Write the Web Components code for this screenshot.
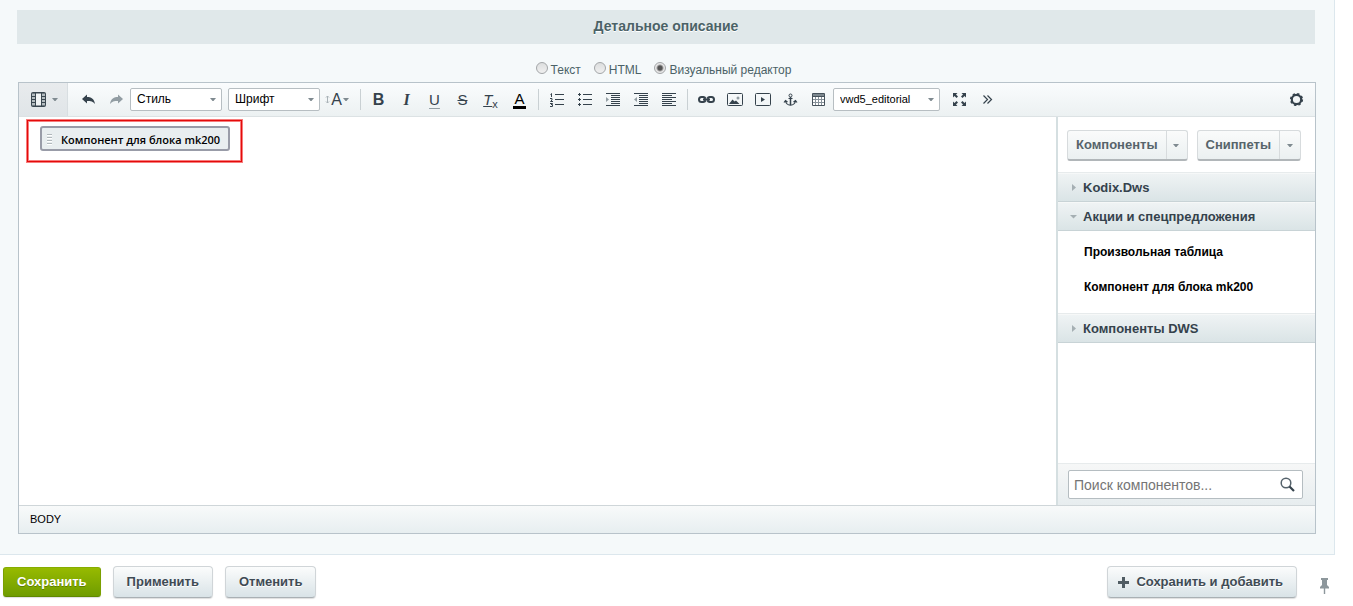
<!DOCTYPE html>
<html lang="ru">
<head>
<meta charset="utf-8">
<title>Детальное описание</title>
<style>
body { margin: 0; background: #fff; font: 13px/16px "Liberation Sans", Arial, sans-serif; color: #3f4b54; }
</style>
</head>
<body>
<edit-page></edit-page>

<script>
const define = (name, html, setup) => {
  const template = document.createElement('template');
  template.innerHTML = html;
  customElements.define(name, class extends HTMLElement {
    connectedCallback() {
      if (this.shadowRoot) return;
      const root = this.attachShadow({ mode: 'open' });
      root.append(template.content.cloneNode(true));
      if (setup) setup(this, root);
    }
  });
};

const lines = (x1, x2, ys) => ys.map(y => `<path d="M${x1} ${y}H${x2}"/>`).join('');
const ICONS = {
  film: '<rect x="1.500" y="1.500" width="14" height="14" rx="1" fill="#6d787f" stroke="#3a4750"/><path d="M5.500 2h6v13h-6z" fill="#f1f4f5" stroke="#3a4750"/><path d="M2 3h3v2H2zM2 6h3v2H2zM2 9h3v2H2zM2 12h3v2H2zM12 3h3v2h-3zM12 6h3v2h-3zM12 9h3v2h-3zM12 12h3v2h-3z" fill="#b4bcc0"/><path d="M2 5.500h3M2 8.500h3M2 11.500h3M12 5.500h3M12 8.500h3M12 11.500h3" stroke="#3a4750"/>',
  undo: '<path d="M2 8l5-4.500V6c4 0 7 1.500 8 7-2-2.500-4-3-8-3v2.500z" fill="#35424c"/>',
  redo: '<path d="M15 8l-5-4.500V6c-4 0-7 1.500-8 7 2-2.500 4-3 8-3v2.500z" fill="#929da3"/>',
  updown: '<path d="M8.500 5v7M7 6.500l1.500-1.500L10 6.500M7 10.500l1.500 1.500 1.500-1.500" stroke="#a9b2b7" fill="none"/>',
  ol: '<g stroke="#35424c" fill="none"><path d="M1.500 3.500L2.500 2.500V6M1 7.500h2V9L1.500 10.500H4M1 12.500h2.500L2 13.500h1.500v2H1"/>' + lines(6, 15, [3.5, 8.5, 13.5]) + '</g>',
  ul: '<path d="M1 3h3v1H1zM2 2h1v3H2zM1 8h3v1H1zM2 7h1v3H2zM1 13h3v1H1zM2 12h1v3H2z" fill="#35424c"/><g stroke="#35424c">' + lines(6, 15, [3.5, 8.5, 13.5]) + '</g>',
  indent: '<g stroke="#35424c">' + lines(1, 15, [2.5, 14.5]) + lines(6, 15, [4.5, 6.5, 8.5, 10.5, 12.5]) + '</g><path d="M1 6l3 2.500-3 2.500z" fill="#929da3"/>',
  outdent: '<g stroke="#35424c">' + lines(1, 15, [2.5, 14.5]) + lines(6, 15, [4.5, 6.5, 8.5, 10.5, 12.5]) + '</g><path d="M4 6L1 8.500 4 11z" fill="#929da3"/>',
  left: '<g stroke="#35424c">' + lines(1, 15, [2.5, 6.5, 10.5, 14.5]) + lines(1, 11, [4.5, 8.5, 12.5]) + '</g>',
  link: '<g fill="none" stroke="#35424c" stroke-width="2"><path d="M7.500 7.500A2.500 2.500 0 0 0 5 6H3.500a2.500 2.500 0 0 0 0 5H5a2.500 2.500 0 0 0 2.500-1.500M9.500 7.500A2.500 2.500 0 0 1 12 6h1.500a2.500 2.500 0 0 1 0 5H12a2.500 2.500 0 0 1-2.500-1.500M5 8.500h7"/></g>',
  image: '<rect x="1.500" y="2.500" width="15" height="12" rx="1" fill="none" stroke="#35424c"/><path d="M3 13l3.500-4.500 2 2 1.500-1 3.500 3.500z" fill="#35424c"/><circle cx="12" cy="7" r="1.500" fill="#929da3"/>',
  video: '<rect x="1.500" y="2.500" width="15" height="12" rx="1" fill="none" stroke="#35424c"/><path d="M7 6l4 2.500L7 11z" fill="#35424c"/>',
  anchor: '<g fill="none" stroke="#35424c"><circle cx="8.500" cy="4.500" r="1.500"/><path d="M6.500 7.500h4"/><path d="M8.500 6v8" stroke-width="1.500"/><path d="M3.500 10c.5 2.500 2.500 4 5 4.200 2.500-.2 4.500-1.700 5-4.200M2 11.500l1.500-2 2 1.500M15 11.500l-1.500-2-2 1.500" stroke-width="1.200"/></g>',
  table: '<path d="M2.500 2.500h12v12h-12z" fill="#fff" stroke="#46525b"/><path d="M3 8.500h11M3 11.500h11M5.500 5v9M8.500 5v9M11.500 5v9" stroke="#87929a"/><path d="M3 3h11v2H3z" fill="#7d888f"/><path d="M3 5.500h11" stroke="#46525b"/>',
  full: '<path d="M2 2h4.500L5 3.500 7 5.500 5.500 7l-2-2L2 6.500zM15 2h-4.500L12 3.500 10 5.500 11.500 7l2-2L15 6.500zM2 15h4.500L5 13.500l2-2L5.500 10l-2 2L2 10.500zM15 15h-4.500l1.500-1.500-2-2 1.500-1.500 2 2 1.500-1.500z" fill="#35424c"/>',
  more: '<path d="M4.500 4.500l4 4-4 4M8.500 4.500l4 4-4 4" fill="none" stroke="#35424c" stroke-width="1.200"/>',
  gear: '<circle cx="8.500" cy="8.500" r="4.700" fill="none" stroke="#35424c" stroke-width="2.200"/><circle cx="8.500" cy="8.500" r="5.800" fill="none" stroke="#35424c" stroke-width="1.600" stroke-dasharray="2.278 2.278"/>',
  search: '<circle cx="7" cy="7" r="4.800" fill="none" stroke="#56636c" stroke-width="1.500"/><path d="M10.500 10.500l4.500 4.500" stroke="#35424c" stroke-width="2.200"/>',
  plus: '<path d="M8.500 3v11M3 8.500h11" stroke="#505c63" stroke-width="3"/>',
  pin: '<path d="M5 1h7v2h-1v5l2 2v1.500H9.200V17H7.800v-5.500H4V10l2-2V3H5z" fill="#8d979c"/>',
  down: '<path d="M5 7h6L8.500 10h-1z" fill="#7f8a90"/>',
  right: '<path d="M7 5l4 3.500L7 12z" fill="#a5afb3"/>',
  open: '<path d="M5 7h7L8.500 10.500z" fill="#a5afb3"/>'
};

define('ed-icon', `<style>
:host { display: block; width: 17px; height: 17px; flex: none; }
svg { display: block; }
</style>`, (host, root) => {
  root.innerHTML += `<svg width="17" height="17" viewBox="0 0 17 17" aria-hidden="true">${ICONS[host.getAttribute('name')]}</svg>`;
});

define('tool-button', `<style>
:host { display: block; flex: 0 0 28px; }
:host([wide]) { flex-basis: 36px; }
:host([color]) { flex-basis: 30px; }
button { display: flex; align-items: center; justify-content: center; width: 100%; height: 33px; padding: 0 0 0 1px; border: 0; background: none; color: #35424c; font: 15px/16px "Liberation Sans", Arial, sans-serif; }
:host([wide]) button { padding: 0 1px 0 0; }
</style><button type="button"><slot></slot></button>`, (host, root) => {
  root.querySelector('button').setAttribute('aria-label', host.getAttribute('label'));
});

define('tool-select', `<style>
:host { display: block; flex: 0 0 92px; }
:host([wide]) { flex-basis: 107px; }
label { display: grid; align-items: center; }
select, ed-icon { grid-area: 1 / 1; }
select { appearance: none; width: 100%; height: 23px; margin: 0; padding: 0 20px 2px 6px; border: 1px solid #b7bec2; border-radius: 2px; background: #fff; color: #000; font: 12px/16px "Liberation Sans", Arial, sans-serif; }
:host([small]) select { font-size: 11px; }
ed-icon { justify-self: end; pointer-events: none; }
</style><label><select><option></option></select><ed-icon name="down"></ed-icon></label>`, (host, root) => {
  root.querySelector('option').textContent = host.getAttribute('value');
  root.querySelector('select').setAttribute('aria-label', host.getAttribute('label'));
});

define('tool-separator', `<style>
:host { display: block; flex: none; width: 1px; height: 21px; margin: 0 4px; background: #c9d0d3; }
</style>`);

define('editor-toolbar', `<style>
:host { display: flex; align-items: center; height: 33px; border-bottom: 1px solid #dce2e4; background: linear-gradient(#fafcfd, #ecf1f2); }
.view { align-self: stretch; display: flex; align-items: center; justify-content: center; width: 49px; margin-right: 6px; padding: 0 0 0 8px; box-sizing: border-box; border: 0; border-right: 1px solid #d8dee1; background: linear-gradient(#e8ebed, #e0e5e8); }
tool-select + tool-select { margin-left: 6px; }
.first { margin-right: 3px; }
b { font-size: 16px; } i { font: italic bold 16px/16px "Liberation Serif", serif; }
u { font-size: 15px; text-underline-offset: 3px; text-decoration-color: #929da3; } s { font-size: 15px; }
.clear { font-size: 15px; font-style: italic; text-decoration: underline; }
sub { font-size: 11px; line-height: 8px; align-self: flex-end; margin-bottom: 8px; }
.fore { width: 13px; text-align: center; line-height: 15px; border-bottom: 3px solid #000; color: #000; }
.updown { width: 7px; overflow: hidden; display: flex; justify-content: center; }
.updown + span { font-size: 16px; }
.caret { width: 9px; display: flex; justify-content: center; overflow: hidden; }
.end { margin-left: auto; padding-right: 5px; }
tool-select[wide] { margin-left: 1px; }
tool-select[wide] + tool-button { margin-left: 5px; }
</style>
<button class="view" type="button" aria-label="Вид"><ed-icon name="film"></ed-icon><ed-icon name="down"></ed-icon></button>
<tool-button label="Назад"><ed-icon name="undo"></ed-icon></tool-button>
<tool-button label="Вперёд"><ed-icon name="redo"></ed-icon></tool-button>
<tool-select label="Стиль" value="Стиль"></tool-select>
<tool-select label="Шрифт" value="Шрифт"></tool-select>
<tool-button wide label="Размер"><span class="updown"><ed-icon name="updown"></ed-icon></span><span>A</span><span class="caret"><ed-icon name="down"></ed-icon></span></tool-button>
<tool-separator class="first"></tool-separator>
<tool-button label="Жирный"><b>B</b></tool-button>
<tool-button label="Курсив"><i>I</i></tool-button>
<tool-button label="Подчёркнутый"><u>U</u></tool-button>
<tool-button label="Зачёркнутый"><s>S</s></tool-button>
<tool-button label="Очистить"><span class="clear">T</span><sub>x</sub></tool-button>
<tool-button color label="Цвет"><span class="fore">A</span></tool-button>
<tool-separator></tool-separator>
<tool-button label="Нумерованный список"><ed-icon name="ol"></ed-icon></tool-button>
<tool-button label="Список"><ed-icon name="ul"></ed-icon></tool-button>
<tool-button label="Увеличить отступ"><ed-icon name="indent"></ed-icon></tool-button>
<tool-button label="Уменьшить отступ"><ed-icon name="outdent"></ed-icon></tool-button>
<tool-button label="Выравнивание"><ed-icon name="left"></ed-icon></tool-button>
<tool-separator></tool-separator>
<tool-button label="Ссылка"><ed-icon name="link"></ed-icon></tool-button>
<tool-button label="Изображение"><ed-icon name="image"></ed-icon></tool-button>
<tool-button label="Видео"><ed-icon name="video"></ed-icon></tool-button>
<tool-button label="Якорь"><ed-icon name="anchor"></ed-icon></tool-button>
<tool-button label="Таблица"><ed-icon name="table"></ed-icon></tool-button>
<tool-select wide small label="Шаблон" value="vwd5_editorial"></tool-select>
<tool-button label="Во весь экран"><ed-icon name="full"></ed-icon></tool-button>
<tool-button label="Ещё"><ed-icon name="more"></ed-icon></tool-button>
<tool-button class="end" label="Настройки"><ed-icon name="gear"></ed-icon></tool-button>`);

define('mode-switch', `<style>
:host { display: flex; justify-content: center; gap: 13px; padding: 16px 8px 3px 0; }
label { display: flex; align-items: center; gap: 3px; font-size: 12px; line-height: 17px; color: #4b6267; padding-top: 2px; }
input { appearance: none; width: 12px; height: 12px; margin: 0 0 5px; border: 1px solid #a3a6a8; border-radius: 50%; background: linear-gradient(#dcdede, #f0f0f0); }
input:checked { background: radial-gradient(#555 0 2px, #e8e8e8 4px); }
</style>
<label><input type="radio" name="mode">Текст</label>
<label><input type="radio" name="mode">HTML</label>
<label><input type="radio" name="mode" checked>Визуальный редактор</label>`);

define('component-chip', `<style>
:host { display: block; width: max-content; border: 1px solid #e30b0b; outline: 1px solid #f77c7c; box-shadow: inset 0 0 0 1px #f77c7c; padding: 5px 11px 10px 12px; }
div { display: flex; align-items: center; box-sizing: border-box; height: 25px; padding: 2px 8px 0 5px; border: 2px solid #999ca8; border-radius: 3px; background: #e9eef0; color: #000; font: 600 11px/16px "Open Sans", sans-serif; }
span { width: 5px; height: 11px; margin-right: 9px; background: repeating-linear-gradient(#b1b8bc 0 1px, #fff 1px 2px, transparent 2px 3px); }
</style><div><span></span><slot></slot></div>`);

define('split-button', `<style>
:host { display: flex; box-sizing: border-box; height: 31px; border: 1px solid #d7dbdd; border-bottom: 2px solid #b1b6b9; border-radius: 3px; background: linear-gradient(#fafbfb, #ebf0f1); }
button { border: 0; background: none; color: #57646b; margin: 0; padding: 0 8px; font: bold 13px/16px "Liberation Sans", Arial, sans-serif; }
.more { display: flex; align-items: center; justify-content: center; width: 21px; padding: 0; border-left: 1px solid #d7dbdd; }
</style><button type="button"><slot></slot></button><button class="more" type="button" aria-label="Открыть меню"><ed-icon name="down"></ed-icon></button>`);

define('component-group', `<style>
:host { display: block; }
button { display: flex; align-items: center; gap: 1px; box-sizing: border-box; width: 100%; height: 29px; padding: 0 0 0 7px; border: 0; border-top: 1px solid #f6f8f8; border-bottom: 1px solid #c8d3d6; background: linear-gradient(#eff3f4, #dae4e6); color: #35424c; font: bold 13px/16px "Liberation Sans", Arial, sans-serif; }
slot { display: block; }
:host([open]) slot { padding: 4px 0 8px; border-bottom: 1px solid #e7ebec; }
</style><button type="button"><ed-icon></ed-icon><b></b></button><slot></slot>`, (host, root) => {
  const open = host.hasAttribute('open');
  const button = root.querySelector('button');
  button.setAttribute('aria-expanded', open);
  root.querySelector('b').textContent = host.getAttribute('label');
  const icon = document.createElement('ed-icon');
  icon.setAttribute('name', open ? 'open' : 'right');
  root.querySelector('ed-icon').replaceWith(icon);
});

define('component-item', `<style>
:host { display: block; padding: 0 0 0 26px; color: #000; font: bold 12px/35px "Liberation Sans", Arial, sans-serif; }
</style><slot></slot>`);

define('component-panel', `<style>
:host { display: flex; flex-direction: column; width: 257px; border-left: 2px solid #d5dfe1; background: #fff; }
header { display: flex; gap: 9px; padding: 13px 9px 11px; border-bottom: 1px solid #e7ebec; }
footer { margin-top: auto; padding: 6px 12px 6px 10px; border-top: 1px solid #e7ebec; background: linear-gradient(#f6f7f7, #e7edef); }
label { display: flex; align-items: center; box-sizing: border-box; height: 29px; padding: 0 6px 0 5px; border: 1px solid #b5bdc1; border-radius: 2px; background: #fff; }
input { flex: 1; min-width: 0; padding: 0; border: 0; outline: 0; background: none; font: 14px/16px "Liberation Sans", Arial, sans-serif; }
input::placeholder { color: #757575; opacity: 1; }
</style>
<header><split-button>Компоненты</split-button><split-button>Сниппеты</split-button></header>
<component-group label="Kodix.Dws"></component-group>
<component-group open label="Акции и спецпредложения"><component-item>Произвольная таблица</component-item><component-item>Компонент для блока mk200</component-item></component-group>
<component-group label="Компоненты DWS"></component-group>
<footer><label><input type="text" aria-label="Поиск компонентов" placeholder="Поиск компонентов..."><ed-icon name="search"></ed-icon></label></footer>`);

define('visual-editor', `<style>
:host { display: block; margin: 0 2px 0 1px; border: 1px solid #b8c3ca; background: #fff; }
.work { display: flex; min-height: 388px; }
.canvas { flex: 1; min-width: 0; padding: 3px 8px; }
.path { height: 27px; border-top: 1px solid #cfd6d9; padding-left: 11px; background: linear-gradient(#f8fafa, #e7eef0); color: #000; font-size: 11px; line-height: 27px; }
</style>
<editor-toolbar></editor-toolbar>
<div class="work"><div class="canvas"><component-chip>Компонент для блока mk200</component-chip></div><component-panel></component-panel></div>
<div class="path">BODY</div>`);

define('form-button', `<style>
:host { display: block; }
button { display: flex; align-items: center; gap: 4px; height: 32px; padding: 0 13px; border: 1px solid #d0d5d8; border-bottom-color: #a9b0b4; border-radius: 4px; background: linear-gradient(#fbfcfc, #d9e3e7); box-shadow: 0 1px 1px #0002; color: #3f4b54; font: bold 13px/16px "Liberation Sans", Arial, sans-serif; text-shadow: 0 1px #fff; box-sizing: border-box; }
:host([primary]) button { height: 30px; border-color: #86ad00 #7a9f00 #5f8800; background: linear-gradient(#97ba00, #6f9c00); color: #fff; text-shadow: 0 1px #0004; border-radius: 3px; }
:host([add]) button { padding-left: 7px; }
</style><button type="button"><slot></slot></button>`);

define('form-actions', `<style>
:host { display: flex; align-items: center; gap: 12px; padding: 11px 20px 8px 3px; }
form-button[add] { margin-left: auto; }
.pin { margin: 6px 0 0 7px; padding: 0; border: 0; background: none; }
</style>
<form-button primary>Сохранить</form-button>
<form-button>Применить</form-button>
<form-button>Отменить</form-button>
<form-button add><ed-icon name="plus"></ed-icon>Сохранить и добавить</form-button>
<button class="pin" type="button" aria-label="Закрепить"><ed-icon name="pin"></ed-icon></button>`);

define('edit-page', `<style>
:host { display: block; }
main { margin-right: 18px; padding: 10px 16px 20px 17px; border: solid #dce7ed; border-width: 0 1px 1px 0; background: #f5f9fa; }
h2 { margin: 0 3px 0 0; padding-bottom: 2px; background: #e0e8ea; color: #4b6267; font-size: 14px; line-height: 32px; text-align: center; text-shadow: 0 1px #fff; }
</style>
<main><h2>Детальное описание</h2><mode-switch></mode-switch><visual-editor></visual-editor></main>
<form-actions></form-actions>`);
</script>
</body>
</html>
